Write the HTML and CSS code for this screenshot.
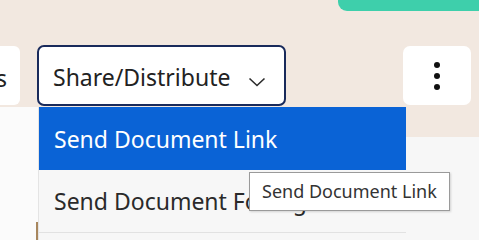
FILE: index.html
```html
<!DOCTYPE html>
<html lang="en">

<head>
    <meta charset="UTF-8">
    <meta name="viewport" content="width=device-width, initial-scale=1.0">
    <title>Document Actions</title>
    <link rel="stylesheet" href="styles.css">
</head>

<body>

    <div class="header">
        <div class="accent"></div>

        <div class="toolbar">
            <button class="side-button">Tools</button>

            <div class="dropdown">
                <button class="dropdown-toggle">
                    <span>Share/Distribute</span>
                    <svg class="chevron" width="18" height="10" viewBox="0 0 18 10">
                        <path d="M1.5 1.5 L9 8.5 L16.5 1.5" fill="none" stroke="#2b2b2b" stroke-width="1.6" />
                    </svg>
                </button>

                <div class="dropdown-menu">
                    <div class="menu-item active">Send Document Link</div>
                    <div class="menu-item">
                        Send Document For Signature
                        <div class="tooltip">Send Document Link</div>
                    </div>
                    <div class="menu-item">Download</div>
                </div>
            </div>

            <button class="more-button">
                <span class="dot"></span>
                <span class="dot"></span>
                <span class="dot"></span>
            </button>
        </div>
    </div>

    <div class="content">
        <div class="panel">
            <div class="caret"></div>
        </div>
    </div>

</body>

</html>
```

FILE: styles.css
```css
html,
body {
    height: 240px;
}

body {
    margin: 0;
    font-family: "Noto Sans", "Open Sans", sans-serif;
    background: #f7f7f7;
    overflow: hidden;
}

.header {
    height: 137px;
    background: #f2e8e0;
    display: flex;
    flex-direction: column;
}

.accent {
    align-self: flex-end;
    width: 141px;
    height: 11px;
    background: #3ecfab;
    border-bottom-left-radius: 9px;
}

.toolbar {
    display: flex;
    align-items: flex-start;
    margin-top: 34px;
}

button {
    font-family: inherit;
    border: none;
    background: #fff;
    cursor: pointer;
}

.side-button {
    margin-left: -50px;
    width: 70px;
    height: 59px;
    margin-top: 1px;
    border-radius: 6px;
    padding: 4px 13px 0 0;
    text-align: right;
    font-size: 23px;
    color: #222;
}

.dropdown {
    position: relative;
    margin-left: 17px;
}

.dropdown-toggle {
    width: 249px;
    height: 61px;
    border: 2.5px solid #192a5b;
    border-radius: 7px;
    padding: 3px 18px 0 14px;
    display: flex;
    align-items: center;
    justify-content: space-between;
    font-size: 23px;
    color: #222;
}

.chevron {
    margin-top: 10px;
}

.dropdown-menu {
    position: absolute;
    top: 62px;
    left: 1px;
    width: 367px;
    background: #f7f7f7;
    border-left: 1px solid #e4e4e4;
    z-index: 2;
}

.menu-item {
    position: relative;
    height: 62px;
    padding-left: 15px;
    display: flex;
    align-items: center;
    font-size: 23px;
    color: #2a2a2a;
    border-bottom: 1px solid #e2e2e2;
    white-space: nowrap;
}

.menu-item.active {
    background: #0a63d6;
    color: #fff;
    border-bottom: none;
    height: 63px;
}

.tooltip {
    position: absolute;
    top: 2px;
    left: 210px;
    padding: 6px 12px 7px 12px;
    background: #fff;
    border: 1px solid #9a9a9a;
    box-shadow: 1px 1px 2px rgba(0, 0, 0, 0.15);
    font-size: 18px;
    color: #333;
}

.more-button {
    margin-left: auto;
    margin-right: 8px;
    margin-top: 1px;
    width: 68px;
    height: 59px;
    border-radius: 7px;
    display: flex;
    flex-direction: column;
    align-items: center;
    justify-content: center;
    gap: 5px;
}

.dot {
    width: 6px;
    height: 6px;
    border-radius: 50%;
    background: #111;
}

.content {
    margin-top: -30px;
}

.panel {
    width: 300px;
    height: 133px;
    background: #fbfbfb;
    position: relative;
}

.caret {
    position: absolute;
    left: 36px;
    top: 115px;
    width: 2px;
    height: 18px;
    background: #a8875e;
}
```
